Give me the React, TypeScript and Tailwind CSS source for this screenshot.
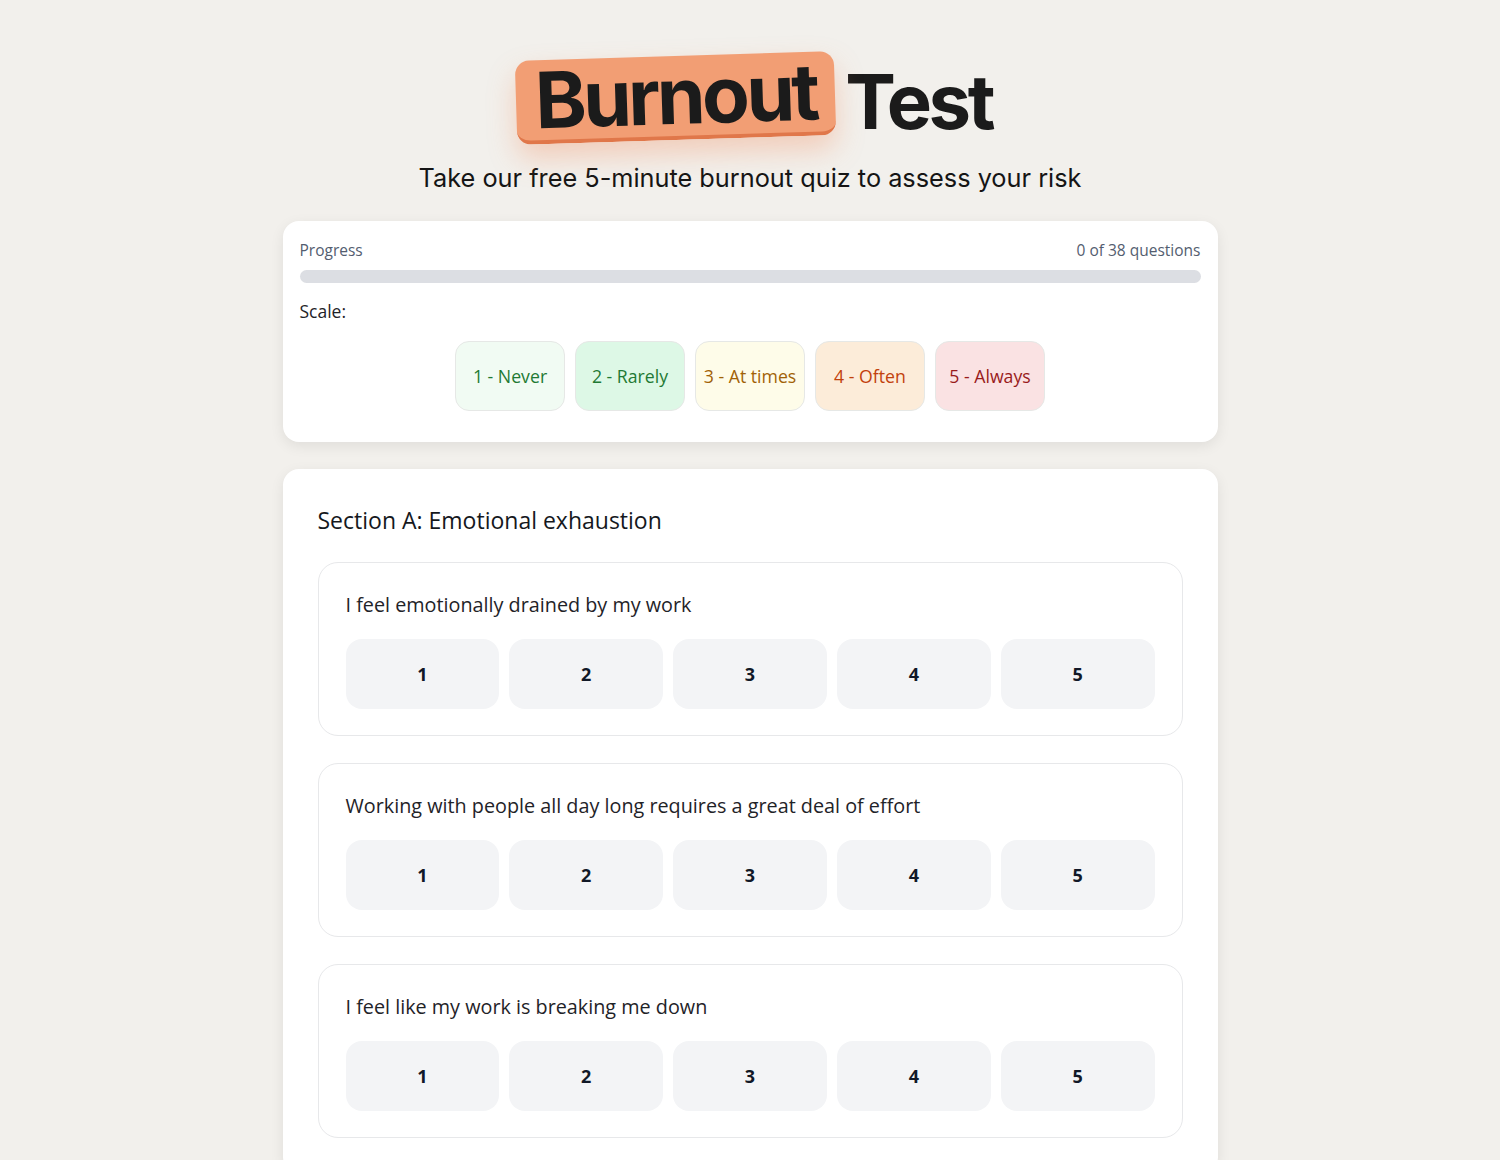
import React from 'react';

const scale = [
  { label: '1 - Never', cls: 'bg-[#f1fbf3] text-[#1f7a34]' },
  { label: '2 - Rarely', cls: 'bg-[#ddf8e6] text-[#1f7a34]' },
  { label: '3 - At times', cls: 'bg-[#fefce9] text-[#a16207]' },
  { label: '4 - Often', cls: 'bg-[#fcecd9] text-[#c2410c]' },
  { label: '5 - Always', cls: 'bg-[#fae2e3] text-[#991b1b]' },
];

const questions = [
  'I feel emotionally drained by my work',
  'Working with people all day long requires a great deal of effort',
  'I feel like my work is breaking me down',
];

function Question({ text }: { text: string }) {
  return (
    <div className="rounded-[20px] border border-[#e7e8ea] px-[27px] pt-[29px] pb-[26px]">
      <p className="text-[19.8px] leading-[26px] text-[#1f2328]">{text}</p>
      <div className="mt-[21px] grid grid-cols-5 gap-[10px]">
        {[1, 2, 3, 4, 5].map(n => (
          <button
            key={n}
            className="h-[70px] rounded-[16px] bg-[#f3f4f6] text-[18px] font-bold text-[#111827]"
          >
            {n}
          </button>
        ))}
      </div>
    </div>
  );
}

export default function App() {
  return (
    <main
      className="min-h-screen bg-[#f2f0ec] pb-10"
      style={{ fontFamily: '"Open Sans", "Noto Sans", sans-serif' }}
    >
      <header className="flex flex-col items-center pt-[56px]">
        <div className="flex items-center gap-[10px] pl-[8px]" style={{ fontFamily: 'Inter, "Liberation Sans", sans-serif' }}>
          <div className="-rotate-[1.8deg] rounded-[14px] border-b-[4px] border-[#e0774a] bg-[#f29e74] px-[19px] pt-[3px] pb-[3px] shadow-[0_14px_28px_rgba(240,140,95,0.35)]">
            <span className="block text-[78px] font-bold leading-[74px] tracking-[-0.045em] text-[#1b1b1b]">
              Burnout
            </span>
          </div>
          <span className="block pt-[6px] text-[76px] font-bold leading-[74px] tracking-[-0.045em] text-[#1b1b1b]">
            Test
          </span>
        </div>
        <p
          className="mt-[21px] text-[25.3px] leading-[34px] text-[#151515]"
          style={{ fontFamily: 'Inter, "Liberation Sans", sans-serif' }}
        >
          Take our free 5-minute burnout quiz to assess your risk
        </p>
      </header>

      <div className="mx-auto mt-[26px] w-[935px]">
        <section className="rounded-[16px] bg-white px-[17px] pt-[19px] pb-[31px] shadow-[0_4px_14px_rgba(0,0,0,0.08)]">
          <div className="flex items-center justify-between text-[15.5px] leading-[20px] text-[#535d6f]">
            <span>Progress</span>
            <span>0 of 38 questions</span>
          </div>
          <div className="mt-[10px] h-[13px] rounded-full bg-[#dcdee3]" />
          <p className="mt-[17px] text-[17.5px] leading-[22px] text-[#1f2328]">Scale:</p>
          <div className="mt-[19px] flex justify-center gap-[10px]">
            {scale.map(s => (
              <div
                key={s.label}
                className={`flex h-[70px] w-[110px] items-center justify-center rounded-[14px] border border-[#e6e8e6] text-[17.7px] ${s.cls}`}
              >
                {s.label}
              </div>
            ))}
          </div>
        </section>

        <section className="mt-[27px] rounded-[16px] bg-white px-[35px] pt-[36px] pb-[35px] shadow-[0_4px_14px_rgba(0,0,0,0.08)]">
          <h2 className="text-[23px] font-medium leading-[30px] text-[#15181d]">
            Section A: Emotional exhaustion
          </h2>
          <div className="mt-[27px] flex flex-col gap-[27px]">
            {questions.map(q => (
              <Question key={q} text={q} />
            ))}
          </div>
        </section>
      </div>
    </main>
  );
}
